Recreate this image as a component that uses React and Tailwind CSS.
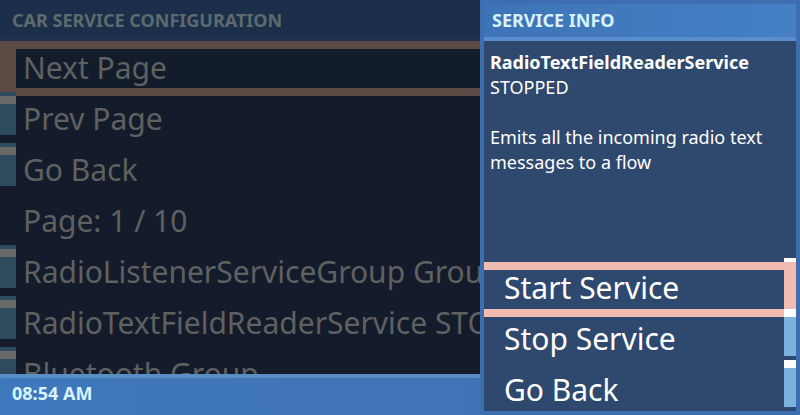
import React from "react";

const font = { fontFamily: '"Noto Sans", "Open Sans", sans-serif' };

function LeftMarker() {
  return (
    <div className="w-[16px] h-[43px] bg-[#2e4a5d] pt-[4px] shrink-0">
      <div className="h-[8px] bg-[#696969]" />
    </div>
  );
}

function LeftRow({ text, marker = true }) {
  return (
    <div className="relative h-[51px] flex shrink-0">
      {marker ? <LeftMarker /> : <div className="w-[16px] shrink-0" />}
      <div className="pl-[7px] pt-[12px] text-[30px] leading-[30px] text-[#5f6161] whitespace-nowrap">
        {text}
      </div>
    </div>
  );
}

function RightMarker() {
  return (
    <div className="w-[12px] h-[47px] bg-[#7ab3dd] shrink-0">
      <div className="h-[8px] bg-white" />
    </div>
  );
}

function RightRow({ text, selected }) {
  return (
    <div className="relative h-[51px] flex shrink-0">
      <div className="flex-1 pl-[20px] pt-[15px] text-[30px] leading-[30px] text-white whitespace-nowrap">
        {text}
      </div>
      <RightMarker />
      {selected && (
        <div className="absolute left-0 right-0 top-[4px] h-[55px] border-t-8 border-b-8 border-r-[12px] border-[#f0bbb0]" />
      )}
    </div>
  );
}

export default function App() {
  return (
    <div className="relative w-[800px] h-[415px] overflow-hidden bg-[#141c2b]" style={font}>
      <div className="flex flex-col w-full h-full">
        <div className="h-[37px] bg-[#1b2f4b] pl-[12px] pt-[11px] shrink-0">
          <div className="text-[18px] leading-[18px] font-bold text-[#5d6b6e]">
            CAR SERVICE CONFIGURATION
          </div>
        </div>
        <div className="h-[4px] bg-[#1f3350] shrink-0" />
        <div className="flex-1 flex flex-col overflow-hidden bg-[#141c2b]">
          <div className="relative h-[55px] mb-[-4px] border-t-8 border-b-8 border-l-[16px] border-[#5e4a44] shrink-0 bg-[#131c2b]">
            <div className="pl-[7px] pt-[4px] text-[30px] leading-[30px] text-[#5f6161] whitespace-nowrap">
              Next Page
            </div>
          </div>
          <LeftRow text="Prev Page" />
          <LeftRow text="Go Back" />
          <LeftRow text="Page: 1 / 10" marker={false} />
          <LeftRow text="RadioListenerServiceGroup Group" />
          <LeftRow text="RadioTextFieldReaderService STOPPED" />
          <LeftRow text="Bluetooth Group" />
        </div>
        <div className="h-[41px] shrink-0 border-t-4 border-[#5a8cc6] bg-gradient-to-r from-[#3f78bc] to-[#3e70b1] pl-[12px] pt-[6px]">
          <div className="text-[18px] leading-[18px] font-bold text-[#d8f4ff]">08:54 AM</div>
        </div>
      </div>

      <div className="absolute top-0 right-0 w-[320px] h-[415px] border-4 border-[#3c6eb0] bg-[#2f486d] flex flex-col">
        <div className="h-[33px] shrink-0 bg-gradient-to-r from-[#3e74b7] to-[#4580c4] pl-[8px] pt-[7px]">
          <div className="text-[18px] leading-[18px] font-bold text-[#d6f3ff]">SERVICE INFO</div>
        </div>
        <div className="h-[4px] shrink-0 bg-[#5a8dcb]" />
        <div className="flex-1 flex flex-col">
          <div className="pl-[6px] pt-[9px] text-[18px] leading-[25px] text-white">
            <div className="font-bold">RadioTextFieldReaderService</div>
            <div>STOPPED</div>
            <div>&nbsp;</div>
            <div>Emits all the incoming radio text</div>
            <div>messages to a flow</div>
          </div>
          <div className="flex-1" />
          <RightRow text="Start Service" selected />
          <RightRow text="Stop Service" />
          <RightRow text="Go Back" />
        </div>
      </div>
    </div>
  );
}
